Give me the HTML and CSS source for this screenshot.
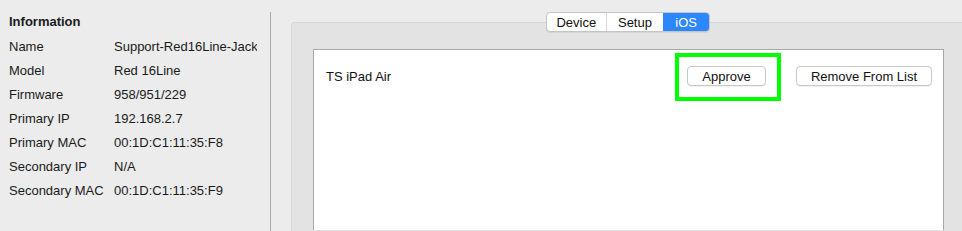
FILE: index.html
```html
<!DOCTYPE html>
<html>
<head>
<meta charset="utf-8">
<link rel="stylesheet" href="styles.css">
</head>
<body>
<div class="window">
  <aside class="info">
    <h2 class="info-title">Information</h2>
    <div class="info-row"><span class="label">Name</span><span class="value">Support-Red16Line-Jack</span></div>
    <div class="info-row"><span class="label">Model</span><span class="value">Red 16Line</span></div>
    <div class="info-row"><span class="label">Firmware</span><span class="value">958/951/229</span></div>
    <div class="info-row"><span class="label">Primary IP</span><span class="value">192.168.2.7</span></div>
    <div class="info-row"><span class="label">Primary MAC</span><span class="value">00:1D:C1:11:35:F8</span></div>
    <div class="info-row"><span class="label">Secondary IP</span><span class="value">N/A</span></div>
    <div class="info-row"><span class="label">Secondary MAC</span><span class="value">00:1D:C1:11:35:F9</span></div>
  </aside>
  <div class="divider"></div>
  <main class="content">
    <section class="group">
      <div class="tabs">
        <span class="tab">Device</span>
        <span class="tab">Setup</span>
        <span class="tab active">iOS</span>
      </div>
      <div class="list">
        <div class="list-row">
          <span class="device-name">TS iPad Air</span>
          <div class="actions">
            <div class="highlight-wrap">
              <button class="btn btn-approve">Approve</button>
              <span class="highlight"></span>
            </div>
            <button class="btn btn-remove">Remove From List</button>
          </div>
        </div>
      </div>
    </section>
  </main>
</div>
</body>
</html>
```

FILE: styles.css
```css
html, body {
  margin: 0;
  padding: 0;
}
body {
  background: #ececec;
  font-family: "Liberation Sans", Arial, Helvetica, sans-serif;
  font-size: 13px;
  color: #1a1a1a;
  overflow: hidden;
}
.window {
  display: flex;
  height: 231px;
  overflow: hidden;
}
.info {
  width: 261px;
  flex: none;
  padding: 14px 0 0 9px;
  overflow: hidden;
}
.info-title {
  margin: 0 0 4px 0;
  font-size: 13px;
  font-weight: bold;
  line-height: 16px;
}
.info-row {
  display: flex;
  height: 24px;
  align-items: center;
  white-space: nowrap;
}
.label {
  width: 105px;
  flex: none;
}
.value {
  width: 143px;
  flex: none;
  overflow: hidden;
}
.divider {
  width: 1px;
  flex: none;
  margin-top: 12px;
  background: #a9a9a9;
}
.content {
  flex: none;
  padding: 22px 0 0 20px;
}
.group {
  width: 676px;
  height: 209px;
  box-sizing: border-box;
  background: #e3e3e3;
  border: 1px solid #d6d6d6;
  border-bottom: none;
  border-radius: 4px 4px 0 0;
}
.tabs {
  display: flex;
  width: 164px;
  height: 20px;
  margin: -11px 0 0 254px;
  box-sizing: border-box;
  border: 1px solid #c4c4c4;
  border-radius: 4px;
  background: #fff;
  overflow: hidden;
  box-shadow: 0 1px 0 rgba(0,0,0,0.06);
}
.tab {
  display: flex;
  align-items: center;
  justify-content: center;
  height: 18px;
  font-size: 13px;
  color: #111;
}
.tab:nth-child(1) {
  width: 59px;
  border-right: 1px solid #d8d8d8;
}
.tab:nth-child(2) {
  width: 57px;
}
.tab.active {
  width: 46px;
  background: #2b87fb;
  color: #fff;
}
.list {
  margin: 17px 0 0 21px;
  width: 631px;
  height: 181px;
  box-sizing: border-box;
  background: #fff;
  border: 1px solid #a8a8a8;
  border-bottom: none;
}
.list-row {
  display: flex;
  align-items: center;
  justify-content: space-between;
  padding: 16px 11px 0 12px;
  height: 20px;
}
.device-name {
  font-size: 13px;
  color: #111;
}
.actions {
  display: flex;
  align-items: center;
  gap: 30px;
}
.highlight-wrap {
  position: relative;
  display: flex;
}
.btn {
  height: 20px;
  box-sizing: border-box;
  border: 1px solid #c8c8c8;
  border-radius: 4px;
  background: #fff;
  font-family: "Liberation Sans", Arial, Helvetica, sans-serif;
  font-size: 13px;
  color: #111;
  padding: 0;
  box-shadow: 0 1px 0 rgba(0,0,0,0.05);
}
.btn-approve {
  width: 79px;
}
.btn-remove {
  width: 136px;
}
.highlight {
  position: absolute;
  left: -12px;
  top: -13px;
  width: 106px;
  height: 48px;
  box-sizing: border-box;
  border: 4px solid #00ff00;
}
```
